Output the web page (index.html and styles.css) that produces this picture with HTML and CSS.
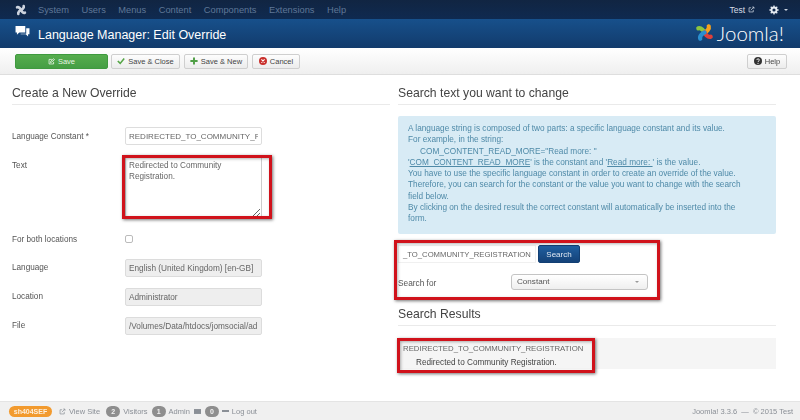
FILE: index.html
```html
<!DOCTYPE html>
<html lang="en">
<head>
<meta charset="utf-8">
<title>Language Manager: Edit Override</title>
<link rel="stylesheet" href="styles.css">
</head>
<body>
<div class="page">
  <nav class="navbar">
    <svg class="nav-logo" viewBox="0 0 20 20" width="12" height="12">
      <g fill="none" stroke="#ccd3de" stroke-width="4.500" stroke-linecap="round">
        <path d="M3.500 5.500c3-1 6 3 6.500 4.500"/>
        <path d="M14.500 3.500c1 3-3 6-4.500 6.500"/>
        <path d="M16.500 14.500c-3 1-6-3-6.500-4.500"/>
        <path d="M5.500 16.500c-1-3 3-6 4.500-6.500"/>
      </g>
    </svg>
    <ul class="menu">
      <li>System</li><li>Users</li><li>Menus</li><li>Content</li><li>Components</li><li>Extensions</li><li>Help</li>
    </ul>
    <div class="nav-right">
      <span class="user">Test
        <svg viewBox="0 0 10 10" width="7" height="7"><path d="M7.500 5.500v3h-6v-6h3M4 6l4.500-4.500M6 1.500h2.500v2.500" fill="none" stroke="#d5dce6" stroke-width="1"/></svg>
      </span>
      <svg class="gear" viewBox="0 0 12 12" width="10" height="10"><circle cx="6" cy="6" r="3" fill="none" stroke="#e6ebf2" stroke-width="2.200"/><path d="M6 0.500v2M6 9.500v2M0.500 6h2M9.500 6h2M2.100 2.100l1.400 1.400M8.500 8.500l1.400 1.400M2.100 9.900l1.400-1.400M8.500 3.500l1.400-1.400" stroke="#e6ebf2" stroke-width="1.600"/></svg>
      <span class="caret"></span>
    </div>
  </nav>

  <header class="titlebar">
    <svg class="title-icon" viewBox="0 0 16 14" width="15" height="13"><path d="M0.500 1h10.500v7h-6.500l-2.500 2.500v-2.500h-1.500z" fill="#fff"/><path d="M12 3.500h3.500v6.500h-1.500v2.500l-2.500-2.500h-5.500v-.7h6z" fill="#fff"/></svg>
    <h1 class="title">Language Manager: Edit Override</h1>
    <div class="brand">
      <svg viewBox="0 0 20 20" width="19" height="19">
        <g fill="none" stroke-width="4.500" stroke-linecap="round">
          <path d="M3.500 5.500c3-1 6 3 6.500 4.500" stroke="#8cc63f"/>
          <path d="M14.500 3.500c1 3-3 6-4.500 6.500" stroke="#f6a21c"/>
          <path d="M16.500 14.500c-3 1-6-3-6.500-4.500" stroke="#e0403a"/>
          <path d="M5.500 16.500c-1-3 3-6 4.500-6.500" stroke="#2a8fd0"/>
        </g>
      </svg>
      <span class="brand-name">Joomla!</span>
    </div>
  </header>

  <div class="toolbar">
    <button class="btn btn-save">
      <svg viewBox="0 0 10 10" width="7" height="7"><path d="M8 5.500v3h-6.500v-6.500h4M3.500 6.500l.5-2 4-3.500 1.200 1.400-4 3.500z" fill="none" stroke="#fff" stroke-width="1"/></svg>
      Save
    </button>
    <button class="btn btn-close">
      <svg viewBox="0 0 10 10" width="8" height="8"><path d="M1 5l3 3 5-6" fill="none" stroke="#55a546" stroke-width="2"/></svg>
      Save &amp; Close
    </button>
    <button class="btn btn-new">
      <svg viewBox="0 0 10 10" width="8" height="8"><path d="M5 .5v9M.5 5h9" stroke="#4f9e45" stroke-width="2.400"/></svg>
      Save &amp; New
    </button>
    <button class="btn btn-cancel">
      <svg viewBox="0 0 10 10" width="8" height="8"><circle cx="5" cy="5" r="5" fill="#c9302c"/><path d="M3 3l4 4M7 3l-4 4" stroke="#fff" stroke-width="1.400"/></svg>
      Cancel
    </button>
    <button class="btn btn-help">
      <svg viewBox="0 0 10 10" width="8" height="8"><circle cx="5" cy="5" r="5" fill="#333"/><path d="M3.500 3.800c0-2 3.200-2 3.200 0 0 1.200-1.700 1.100-1.700 2.400" fill="none" stroke="#fff" stroke-width="1.100"/><circle cx="5" cy="7.900" r=".7" fill="#fff"/></svg>
      Help
    </button>
  </div>

  <main class="content">
    <section class="col col-left">
      <h2 class="section-title">Create a New Override</h2>
      <div class="form">
        <div class="row row-constant">
          <label class="label label-low">Language Constant *</label>
          <input class="field field-upper" type="text" value="REDIRECTED_TO_COMMUNITY_REGISTRATION">
        </div>
        <div class="row row-text">
          <label class="label label-low">Text</label>
          <textarea class="field area">Redirected to Community Registration.</textarea>
        </div>
        <div class="row row-check">
          <label class="label label-high">For both locations</label>
          <input class="check" type="checkbox">
        </div>
        <div class="row row-ro">
          <label class="label">Language</label>
          <input class="field readonly" type="text" readonly value="English (United Kingdom) [en-GB]">
        </div>
        <div class="row row-ro">
          <label class="label">Location</label>
          <input class="field readonly" type="text" readonly value="Administrator">
        </div>
        <div class="row row-ro">
          <label class="label">File</label>
          <input class="field readonly" type="text" readonly value="/Volumes/Data/htdocs/jomsocial/administrator/language/overrides">
        </div>
      </div>
    </section>

    <section class="col col-right">
      <h2 class="section-title">Search text you want to change</h2>
      <div class="info">
        A language string is composed of two parts: a specific language constant and its value.<br>
        For example, in the string:<br>
        <span class="indent">COM_CONTENT_READ_MORE="Read more: "</span><br>
        '<u>COM_CONTENT_READ_MORE</u>' is the constant and '<u>Read more: </u>' is the value.<br>
        You have to use the specific language constant in order to create an override of the value.<br>
        Therefore, you can search for the constant or the value you want to change with the search field below.<br>
        By clicking on the desired result the correct constant will automatically be inserted into the form.
      </div>
      <div class="search-line">
        <div class="search-input">_TO_COMMUNITY_REGISTRATION</div>
        <button class="btn-search">Search</button>
      </div>
      <div class="search-for">
        <label class="label-for">Search for</label>
        <div class="select">Constant<span class="select-caret"></span></div>
      </div>
      <h2 class="section-title results-title">Search Results</h2>
      <div class="results">
        <div class="result-key">REDIRECTED_TO_COMMUNITY_REGISTRATION</div>
        <div class="result-val">Redirected to Community Registration.</div>
      </div>
    </section>

    <div class="mark mark-text"></div>
    <div class="mark mark-search"></div>
    <div class="mark mark-result"></div>
  </main>

  <footer class="footer">
    <span class="sef">sh404SEF</span>
    <svg viewBox="0 0 10 10" width="7" height="7"><path d="M7.500 5.500v3h-6v-6h3M4 6l4.500-4.500M6 1.500h2.500v2.500" fill="none" stroke="#8a8f96" stroke-width="1"/></svg>
    <span class="foot-text">View Site</span>
    <span class="count c-visitors">2</span><span class="foot-text">Visitors</span>
    <span class="count">1</span><span class="foot-text">Admin</span>
    <svg class="mail" viewBox="0 0 10 7" width="7" height="5"><rect width="10" height="7" fill="#8a8f96"/></svg>
    <span class="count c-zero">0</span>
    <span class="dash"></span>
    <span class="foot-text">Log out</span>
    <span class="foot-right">Joomla! 3.3.6 &nbsp;—&nbsp; © 2015 Test</span>
  </footer>
</div>
</body>
</html>
```
FILE: styles.css
```css
* { box-sizing: border-box; }
html, body { margin: 0; padding: 0; }
body {
  width: 800px;
  height: 420px;
  overflow: hidden;
  background: #fff;
  font-family: "Liberation Sans", Arial, sans-serif;
  font-size: 8.500px;
  color: #555;
}
.page {
  display: flex;
  flex-direction: column;
  width: 800px;
  height: 420px;
  filter: blur(0.4px);
}

.navbar {
  flex: 0 0 19px;
  display: flex;
  align-items: center;
  padding: 0 12px 0 15px;
  background: linear-gradient(#112542, #0f2a50);
}
.nav-logo { margin-right: 11px; }
.menu {
  display: flex;
  gap: 12.500px;
  margin: 0;
  padding: 0;
  list-style: none;
  font-size: 9.300px;
  color: #5f7797;
}
.nav-right { margin-left: auto; display: flex; align-items: center; color: #d5dce6; font-size: 8.500px; }
.user { display: flex; align-items: center; gap: 3px; margin-right: 14px; }
.gear { margin-right: 5px; }
.caret { width: 0; height: 0; border: 2px solid transparent; border-top-color: #c9d2de; border-bottom: 0; }

.titlebar {
  flex: 0 0 29px;
  display: flex;
  align-items: center;
  padding: 0 16px 0 15px;
  background: linear-gradient(#17508b, #123b6c);
}
.title-icon { margin-right: 8px; margin-top: -4px; }
.title { margin: 2px 0 0; font-size: 12.500px; font-weight: 400; color: #fff; }
.brand { margin-left: auto; margin-top: -2px; display: flex; align-items: center; gap: 3px; color: #fff; }
.brand-name { font-family: Lato, sans-serif; font-weight: 300; font-size: 20.500px; line-height: 22px; }

.toolbar {
  flex: 0 0 27px;
  display: flex;
  align-items: center;
  gap: 4px;
  padding: 0 13px 0 15px;
  background: linear-gradient(#ffffff, #efefef);
  border-bottom: 1px solid #dedede;
}
.btn {
  display: flex;
  align-items: center;
  justify-content: center;
  gap: 3px;
  height: 15px;
  padding: 0;
  border: 1px solid #cfcfcf;
  border-radius: 2px;
  background: linear-gradient(#fdfdfd, #ececec);
  font-family: inherit;
  font-size: 7.500px;
  color: #444;
}
.btn-save {
  width: 93px;
  margin-right: -1px;
  border-color: #3f9a3f;
  background: linear-gradient(#56ad4e, #459e44);
  color: #e6f3e4;
}
.btn-close { width: 69px; }
.btn-new { width: 64px; }
.btn-cancel { width: 48px; }
.btn-help { width: 40px; margin-left: auto; }

.content {
  flex: 1 1 auto;
  position: relative;
  display: grid;
  grid-template-columns: 378px 378px;
  column-gap: 8px;
  padding: 0 24px 0 12px;
  min-height: 0;
}
.section-title {
  margin: 0;
  height: 30px;
  padding-top: 11px;
  font-size: 12.200px;
  line-height: 15px;
  font-weight: 400;
  color: #444;
  border-bottom: 1px solid #eaeaea;
}

.form { display: flex; flex-direction: column; padding-top: 22px; }
.row { display: grid; grid-template-columns: 113px 137px; align-items: start; }
.label { font-size: 8.200px; line-height: 18px; color: #555; }
.label-low { padding-top: 1px; }
.label-high { margin-top: -2px; }
.field {
  display: block;
  width: 137px;
  height: 18px;
  margin: 0;
  padding: 0 3px;
  border: 1px solid #ddd;
  border-radius: 2px;
  background: #fff;
  font-family: inherit;
  font-size: 8.250px;
  color: #666;
  outline: none;
}
.field-upper { font-size: 8px; }
.row-constant { margin-bottom: 10px; }
.row-text { margin-bottom: 15px; }
.area { height: 62px; padding: 3px 3px 2px; font-size: 8.200px; line-height: 11px; border-color: #ccc; }
.row-check { height: 26px; margin-bottom: 0; }
.check { width: 8px; height: 8px; margin: 2px 0 0; appearance: none; border: 1px solid #bbb; border-radius: 2px; background: #fff; }
.row-ro { height: 29px; }
.readonly { background: #eeeeee; border-color: #dcdcdc; color: #666; }

.info {
  height: 118px;
  margin-top: 11px;
  padding: 7px 30px 0 10px;
  border-radius: 2px;
  background: #d8ebf5;
  color: #4f8aa8;
  font-size: 8.250px;
  line-height: 11.250px;
}
.indent { padding-left: 12px; }

.search-line { display: flex; gap: 2px; margin-top: 11px; }
.search-input {
  width: 138px;
  height: 18px;
  padding-left: 4px;
  overflow: hidden;
  white-space: nowrap;
  font-size: 7.700px;
  line-height: 18px;
  color: #666;
  border: 1px solid #f0f0f0;
}
.btn-search {
  width: 42px;
  height: 18px;
  padding: 0;
  border: 1px solid #123f73;
  border-radius: 2px;
  background: linear-gradient(#1f5fa0, #144278);
  color: #dfe8f2;
  font-family: inherit;
  font-size: 8px;
}
.search-for { display: flex; align-items: center; margin-top: 11px; }
.label-for { width: 113px; padding-top: 2px; font-size: 8.300px; color: #555; }
.select {
  position: relative;
  width: 137px;
  height: 16px;
  padding-left: 5px;
  line-height: 14px;
  border: 1px solid #c4c4c4;
  border-radius: 3px;
  background: linear-gradient(#fff, #efefef);
  font-size: 8.100px;
  color: #555;
}
.select-caret { position: absolute; right: 8px; top: 6px; width: 0; height: 0; border: 2px solid transparent; border-top-color: #999; border-bottom: 0; }
.results-title { margin-top: 7px; height: 29px; padding-top: 10px; }
.results { height: 31px; margin-top: 12px; padding: 3px 5px; background: #f5f5f5; font-size: 8.200px; color: #666; }
.result-key { font-size: 7.800px; line-height: 11px; padding-top: 2px; color: #666; }
.result-val { line-height: 11px; margin-top: 3px; padding-left: 13px; color: #444; }

.mark {
  position: absolute;
  border: 3px solid #d0121b;
  box-shadow: 1px 1px 3px rgba(0, 0, 0, .55), inset 1px 1px 3px rgba(0, 0, 0, .3);
  pointer-events: none;
}
.mark-text { left: 122px; top: 80px; width: 150px; height: 64px; }
.mark-search { left: 394px; top: 165px; width: 266px; height: 60px; }
.mark-result { left: 397px; top: 263px; width: 198px; height: 35px; }

.footer {
  flex: 0 0 19px;
  display: flex;
  align-items: center;
  gap: 3px;
  padding: 0 7px 0 9px;
  background: #f0f0f0;
  border-top: 1px solid #e4e4e4;
  font-size: 7.500px;
  color: #8a8f96;
}
.sef {
  width: 43px;
  height: 11px;
  margin-right: 4px;
  line-height: 11px;
  text-align: center;
  border-radius: 6px;
  background: #f29a2e;
  color: #fdeedb;
  font-size: 7px;
  font-weight: 700;
}
.foot-text { margin-right: 1px; }
.count {
  width: 14px;
  height: 11px;
  line-height: 11px;
  text-align: center;
  border-radius: 6px;
  background: #8e8e8e;
  color: #f2f2f2;
  font-size: 7px;
  font-weight: 700;
}
.c-visitors { margin-left: 2px; }
.c-zero { margin-left: 1px; }
.dash { width: 7px; height: 2px; background: #8a8f96; }
.foot-right { margin-left: auto; }
```
